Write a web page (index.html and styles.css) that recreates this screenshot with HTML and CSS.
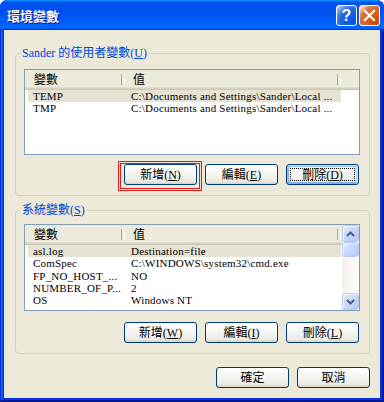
FILE: index.html
```html
<!DOCTYPE html>
<html lang="zh-Hant">
<head>
<meta charset="utf-8">
<title>環境變數</title>
<link rel="stylesheet" href="styles.css">
</head>
<body>
<div class="window">
  <div class="titlebar">
    <span class="title">環境變數</span>
    <div class="title-buttons">
      <span class="tb help">?</span>
      <span class="tb close"><svg width="13" height="13" viewBox="0 0 13 13"><path d="M2 2 L11 11 M11 2 L2 11" stroke="#fff" stroke-width="2.2" stroke-linecap="square"/></svg></span>
    </div>
  </div>
  <div class="client">
    <fieldset class="group group-user">
      <legend>Sander 的使用者變數(<u>U</u>)</legend>
      <div class="listview list-user">
        <div class="lv-main">
          <div class="lv-header">
            <div class="hcell c1">變數</div>
            <div class="hcell c2">值</div>
            <div class="hcell fill"></div>
          </div>
          <div class="row sel"><span class="c1">TEMP</span><span class="c2">C:\Documents and Settings\Sander\Local ...</span></div>
          <div class="row"><span class="c1">TMP</span><span class="c2">C:\Documents and Settings\Sander\Local ...</span></div>
        </div>
      </div>
      <div class="btn-row">
        <span class="marked"><span class="btn">新增(<u>N</u>)</span></span>
        <span class="btn">編輯(<u>E</u>)</span>
        <span class="btn focus">刪除(<u>D</u>)</span>
      </div>
    </fieldset>
    <fieldset class="group group-sys">
      <legend>系統變數(<u>S</u>)</legend>
      <div class="listview list-sys">
        <div class="lv-main">
          <div class="lv-header">
            <div class="hcell c1">變數</div>
            <div class="hcell c2">值</div>
            <div class="hcell fill"></div>
          </div>
          <div class="row sel"><span class="c1">asl.log</span><span class="c2">Destination=file</span></div>
          <div class="row"><span class="c1">ComSpec</span><span class="c2">C:\WINDOWS\system32\cmd.exe</span></div>
          <div class="row"><span class="c1">FP_NO_HOST_...</span><span class="c2">NO</span></div>
          <div class="row"><span class="c1">NUMBER_OF_P...</span><span class="c2">2</span></div>
          <div class="row"><span class="c1">OS</span><span class="c2">Windows NT</span></div>
        </div>
        <div class="scrollbar">
          <span class="sb-btn"><svg width="9" height="6" viewBox="0 0 9 6"><path d="M1 5 L4.5 1.5 L8 5" fill="none" stroke="#4d6185" stroke-width="2"/></svg></span>
          <span class="sb-thumb"></span>
          <span class="sb-track"></span>
          <span class="sb-btn"><svg width="9" height="6" viewBox="0 0 9 6"><path d="M1 1 L4.5 4.5 L8 1" fill="none" stroke="#4d6185" stroke-width="2"/></svg></span>
        </div>
      </div>
      <div class="btn-row">
        <span class="btn">新增(<u>W</u>)</span>
        <span class="btn">編輯(<u>I</u>)</span>
        <span class="btn">刪除(<u>L</u>)</span>
      </div>
    </fieldset>
    <div class="dialog-buttons">
      <span class="btn">確定</span>
      <span class="btn">取消</span>
    </div>
  </div>
</div>
</body>
</html>
```
FILE: styles.css
```css
* { box-sizing: border-box; }
html, body { margin: 0; padding: 0; }
body {
  width: 384px;
  height: 402px;
  overflow: hidden;
  background: #ffffff;
  font-family: "Liberation Serif", "Noto Sans CJK TC", serif;
  font-size: 12px;
  color: #000;
}
u { text-decoration: underline; text-underline-offset: 1px; }

.window {
  width: 384px;
  height: 402px;
  display: flex;
  flex-direction: column;
  border-radius: 8px 8px 0 0;
  background: #0831d9;
  box-shadow: inset -1px -1px #00138c, inset 1px 1px #0831d9, inset -2px -2px #001ea0, inset 2px 2px #166aee, inset -3px -3px #003bda, inset 3px 3px #0855dd;
}

.titlebar {
  height: 30px;
  flex: none;
  display: flex;
  align-items: center;
  justify-content: space-between;
  padding: 1px 4px 0 7px;
  border-radius: 7px 7px 0 0;
  background: linear-gradient(180deg, #0997ff, #0053ee 8%, #0050ee 40%, #0066ff 88%, #0066ff 93%, #005bff 95%, #003dd7 96%, #003dd7);
}
.title {
  color: #fff;
  font-family: "Noto Sans CJK TC", sans-serif;
  font-weight: bold;
  font-size: 13px;
  line-height: 16px;
  text-shadow: 1px 1px #0f1089;
}
.title-buttons { display: flex; gap: 2px; }
.tb {
  width: 21px;
  height: 21px;
  border: 1px solid #fff;
  border-radius: 3px;
  display: flex;
  align-items: center;
  justify-content: center;
  color: #fff;
}
.help {
  background: radial-gradient(circle at 90% 90%, #0054e9 0, #2263d5 55%, #4479e4 70%, #a3bbec 90%, #fff 100%);
  font-family: "Liberation Sans", sans-serif;
  font-weight: bold;
  font-size: 16px;
  line-height: 19px;
}
.close {
  background: radial-gradient(circle at 90% 90%, #cc4600 0, #dc6527 55%, #cd7546 70%, #ffccb2 90%, #fff 100%);
}

.client {
  flex: 1;
  margin: 0 4px 4px;
  background: #ece9d8;
  padding: 0 10px 0 11px;
  display: flex;
  flex-direction: column;
}

.group {
  margin: 0;
  min-width: 0;
  border: 1px solid #d0d0bf;
  border-radius: 4px;
  padding: 9px 9px 10px 8px;
}
.group legend {
  padding: 0 2px;
  margin-left: -4px;
  color: #0046d5;
  font-size: 12px;
  line-height: 14px;
}
.group-user { margin-top: 16px; }
.group-sys { margin-top: 7px; padding-top: 7px; }

.listview {
  display: flex;
  border: 1px solid #7f9db9;
  background: #fff;
  overflow: hidden;
}
.list-user { height: 86px; }
.list-sys { height: 87px; }
.lv-main { flex: 1; min-width: 0; }

.lv-header {
  display: flex;
  height: 20px;
  background: #ebeadb;
  box-shadow: inset 0 -1px #cbc7b8, inset 0 -2px #d6d2c2, inset 0 -3px #e2decd;
}
.hcell {
  position: relative;
  font-family: "Noto Sans CJK TC", sans-serif;
  font-size: 12px;
  line-height: 18px;
  padding-left: 9px;
}
.hcell.c1 { width: 100px; }
.hcell.c2 { width: 216px; padding-left: 8px; }
.hcell.fill { flex: 1; padding: 0; }
.hcell.c1::after, .hcell.c2::after {
  content: "";
  position: absolute;
  right: 0;
  top: 4px;
  bottom: 5px;
  width: 2px;
  border-left: 1px solid #aca899;
  border-right: 1px solid #fff;
}

.row {
  display: flex;
  height: 12.25px;
  font-size: 11px;
  letter-spacing: 0.2px;
  line-height: 12px;
  white-space: nowrap;
}
.row .c1 { width: 100px; padding-left: 8px; overflow: hidden; }
.row .c2 { width: 216px; padding-left: 6px; overflow: hidden; }
.row.sel .c1, .row.sel .c2 { background: #e6e3d3; }
.row.sel .c1 { margin-left: 3px; width: 97px; padding-left: 5px; }

.scrollbar {
  width: 17px;
  flex: none;
  display: flex;
  flex-direction: column;
  background: linear-gradient(90deg, #f3f1ec, #fefefb);
}
.sb-btn, .sb-thumb {
  height: 17px;
  flex: none;
  border: 1px solid #b6c9f5;
  border-radius: 3px;
  background: linear-gradient(135deg, #e3ebfd, #c2d4fc 60%, #b4c9fa);
  box-shadow: inset 1px 1px #f4f7fe;
  display: flex;
  align-items: center;
  justify-content: center;
}
.sb-thumb { height: 15px; }
.sb-track { flex: 1; }

.btn-row {
  display: flex;
  justify-content: flex-end;
  gap: 8px;
  padding-right: 1px;
}
.group-user .btn-row { margin-top: 9px; }
.group-sys .btn-row { margin-top: 11px; }

.dialog-buttons {
  display: flex;
  justify-content: flex-end;
  gap: 8px;
  margin-top: 13px;
}

.btn {
  display: flex;
  align-items: center;
  justify-content: center;
  width: 73px;
  height: 21px;
  border: 1px solid #003c74;
  border-radius: 3px;
  background: linear-gradient(180deg, #fff, #ecebe6 86%, #d6d0c5);
  font-size: 12px;
  line-height: 14px;
  white-space: nowrap;
  position: relative;
}
.btn.focus {
  box-shadow: inset -1px 1px #cee7ff, inset 1px 2px #98b8ea, inset -2px 2px #bcd4f6, inset 1px -1px #89ade4, inset 2px -2px #89ade4;
}
.btn.focus::after {
  content: "";
  position: absolute;
  inset: 3px;
  border: 1px dotted #000;
}

.marked { position: relative; display: flex; }
.marked::before {
  content: "";
  position: absolute;
  left: -6px;
  top: -3px;
  right: -5px;
  bottom: -6px;
  border: 1px solid #e0201a;
  box-shadow: inset 0 0 0 1px #f2ddd6, inset 0 0 0 2px #e0201a;
}
```
